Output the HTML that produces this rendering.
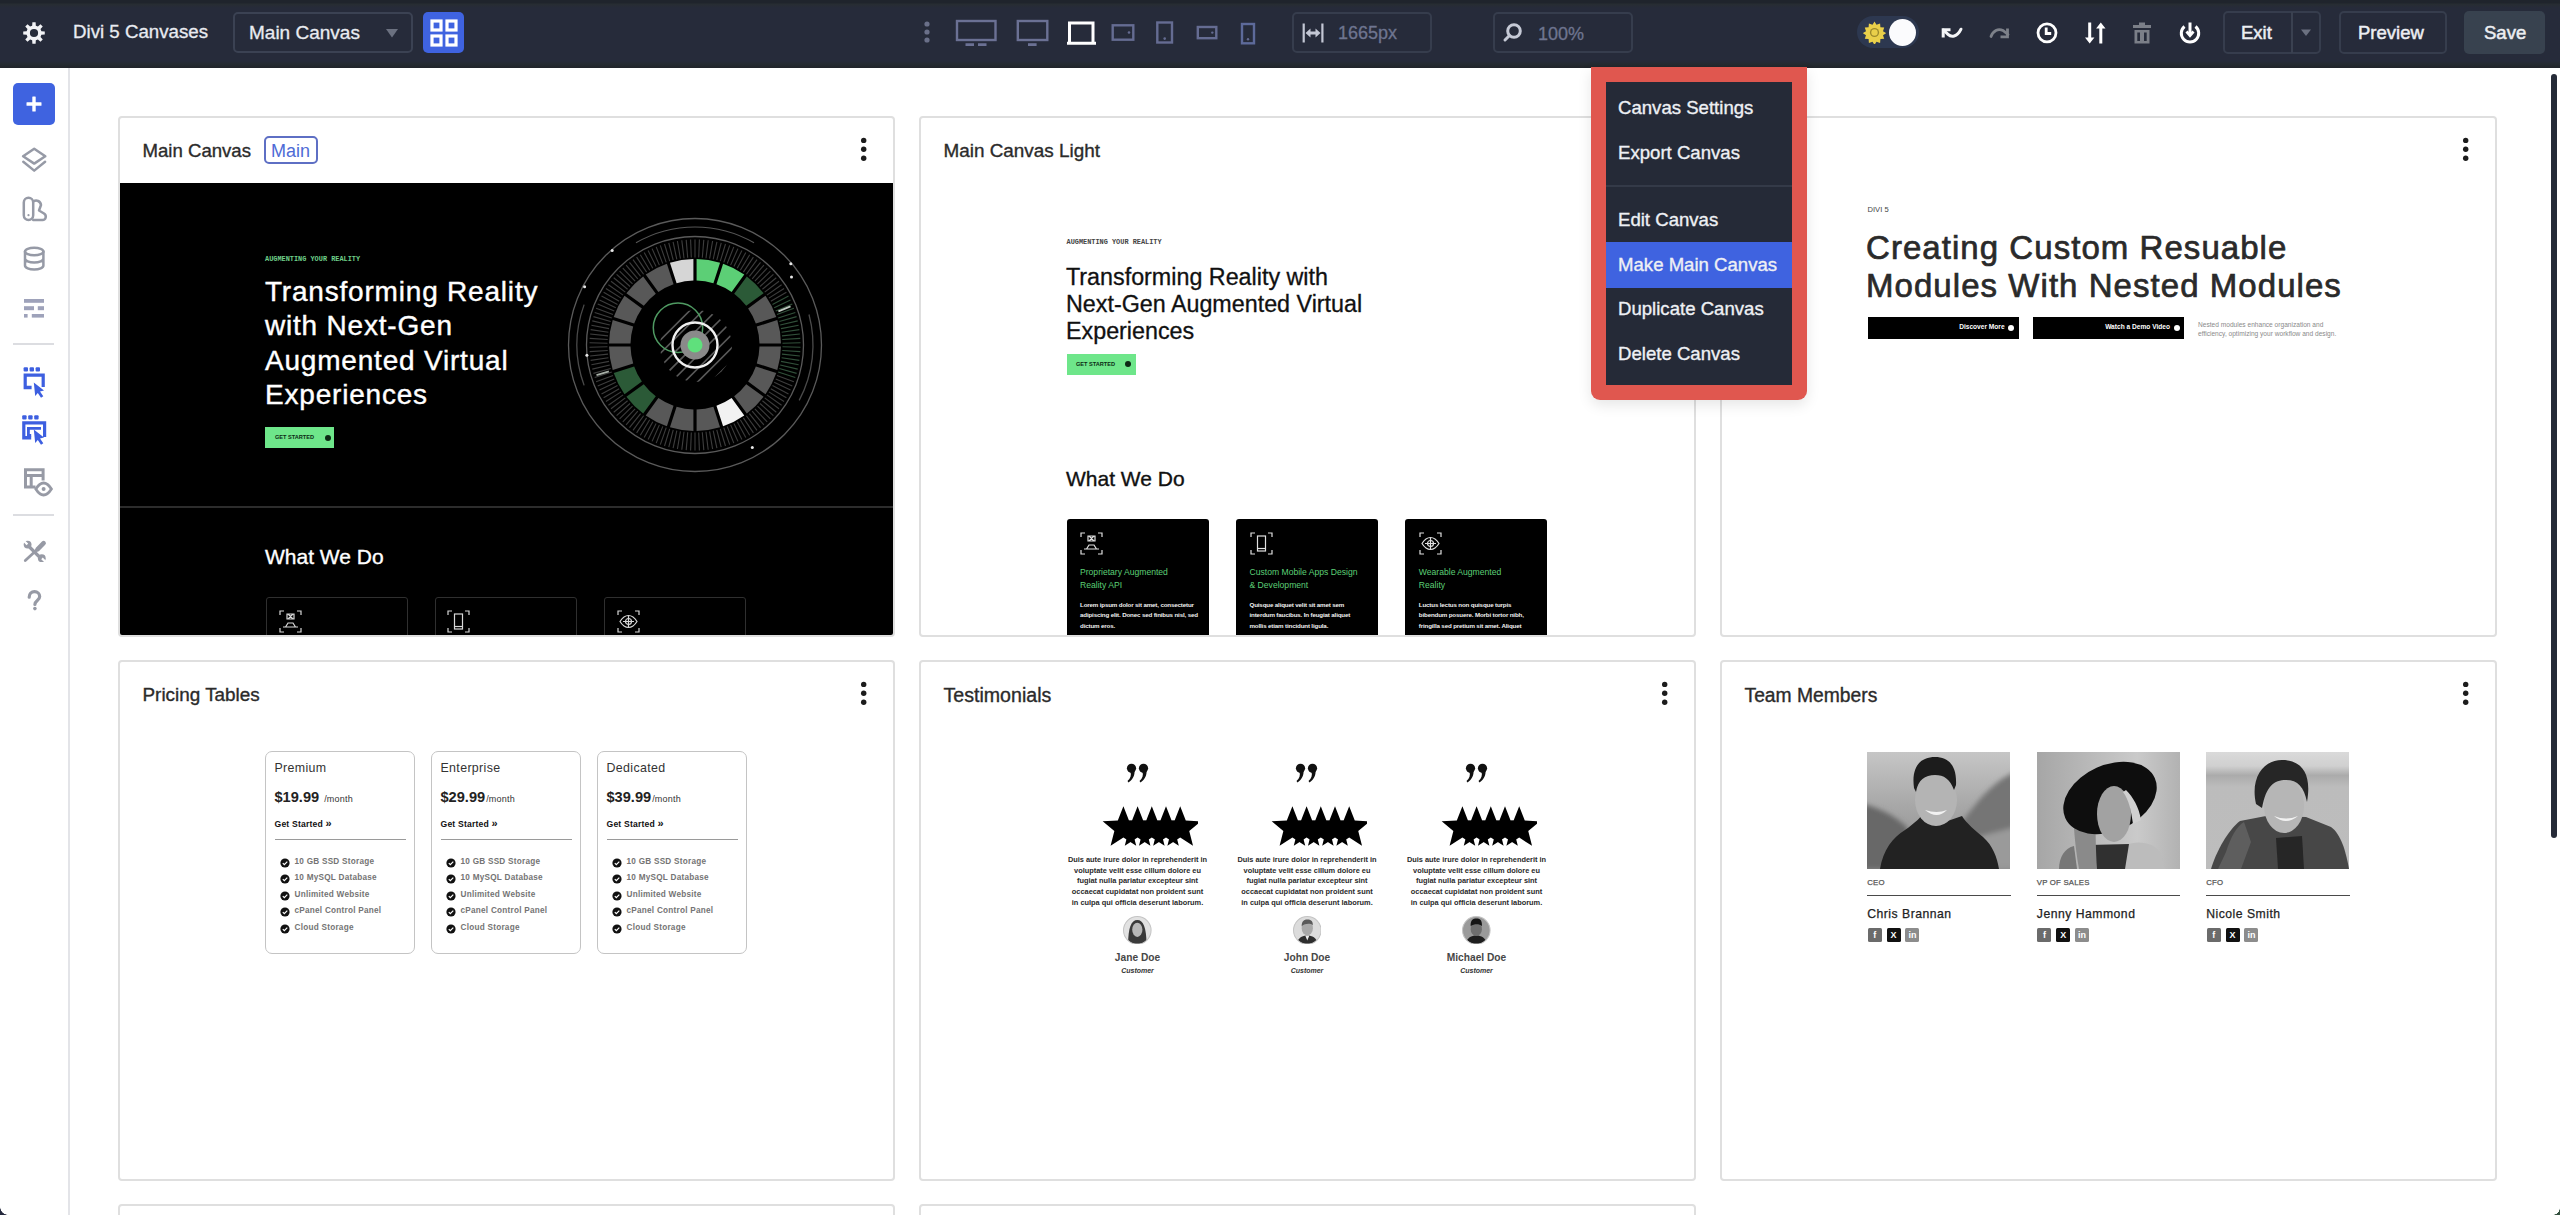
<!DOCTYPE html>
<html><head><meta charset="utf-8">
<style>
*{box-sizing:border-box;margin:0;padding:0}
html,body{width:2560px;height:1215px;overflow:hidden;background:#fff;font-family:"Liberation Sans",sans-serif}
.abs{position:absolute}
#top{position:absolute;left:0;top:0;width:2560px;height:68px;background:linear-gradient(#1f242c 0,#1f242c 3px,#272d32 4px,#262b3a 8px,#262b3a 61px,#252b31 64px,#20242a 68px)}
.tt{position:absolute;color:#e9ebf1;font-size:18px;white-space:nowrap;line-height:1;-webkit-text-stroke-width:0.3px}
.ibox{position:absolute;border:2px solid #363d4d;border-radius:5px}
#side{position:absolute;left:0;top:68px;width:70px;height:1147px;background:#fff;border-right:2px solid #e3e4e8}
.card{position:absolute;width:777px;height:521px;border:2px solid #dfdfdf;border-radius:4px;background:#fff;overflow:hidden}
.ctitle{position:absolute;left:23px;top:23px;font-size:18px;color:#2b2b2b;white-space:nowrap;line-height:1;-webkit-text-stroke:0.35px #2b2b2b}
.kebab{position:absolute;width:6px;height:26px}
.kebab i{position:absolute;left:0;width:6px;height:6px;border-radius:50%;background:#2b2b2b}
.menu-item{position:absolute;left:12px;font-size:18px;color:#eef0f4;white-space:nowrap;line-height:1}
</style></head><body>
<div id="top">
<!-- gear -->
<svg class="abs" style="left:22px;top:21px" width="24" height="24" viewBox="0 0 24 24"><path fill="#f2f3f6" fill-rule="evenodd" d="M10.16 4.63L10.39 1.22L13.61 1.22L13.84 4.63L15.91 5.49L18.48 3.24L20.76 5.52L18.51 8.09L19.37 10.16L22.78 10.39L22.78 13.61L19.37 13.84L18.51 15.91L20.76 18.48L18.48 20.76L15.91 18.51L13.84 19.37L13.61 22.78L10.39 22.78L10.16 19.37L8.09 18.51L5.52 20.76L3.24 18.48L5.49 15.91L4.63 13.84L1.22 13.61L1.22 10.39L4.63 10.16L5.49 8.09L3.24 5.52L5.52 3.24L8.09 5.49ZM12 7.9A4.1 4.1 0 1 0 12 16.1A4.1 4.1 0 1 0 12 7.9Z"/></svg>
<div class="tt" style="left:73px;top:23px;font-size:18.7px">Divi 5 Canvases</div>
<!-- dropdown -->
<div class="ibox" style="left:233px;top:12px;width:180px;height:41px;border-color:#3b4253"></div>
<div class="tt" style="left:249px;top:23px;font-size:19px">Main Canvas</div>
<svg class="abs" style="left:386px;top:29px" width="12" height="9" viewBox="0 0 12 9"><path d="M0 0h12L6 8.5z" fill="#6b7180"/></svg>
<!-- grid button -->
<div class="abs" style="left:423px;top:12px;width:41px;height:41px;background:#3f63e0;border-radius:5px"></div>
<svg class="abs" style="left:430px;top:19px" width="28" height="28" viewBox="0 0 28 28" fill="none" stroke="#fff" stroke-width="3.2"><rect x="2" y="2" width="9" height="9"/><rect x="17" y="2" width="9" height="9"/><rect x="2" y="17" width="9" height="9"/><rect x="17" y="17" width="9" height="9"/></svg>

<!-- kebab -->
<svg class="abs" style="left:922px;top:20px" width="10" height="26" viewBox="0 0 10 26" fill="#6a7089"><circle cx="5" cy="4" r="2.6"/><circle cx="5" cy="12" r="2.6"/><circle cx="5" cy="20" r="2.6"/></svg>
<!-- devices -->
<svg class="abs" style="left:950px;top:14px" width="320" height="36" viewBox="950 14 320 36" fill="none" stroke-width="2.4">
 <g stroke="#6b7194">
  <rect x="957" y="21" width="38.5" height="19"/>
  <path d="M965.5 44.6h8.5M978 44.6h8.5" stroke-width="2.8"/>
  <rect x="1017.8" y="21" width="29.5" height="19"/>
  <path d="M1028 44.6h8.6" stroke-width="2.8"/>
 </g>
 <path d="M1069.5 43V23h23.5v20M1067 43.3h29" stroke="#fff" stroke-width="3"/>
 <g stroke="#656c92">
  <rect x="1112.7" y="25.3" width="20.6" height="14.4"/>
  <rect x="1157.3" y="22.5" width="14.7" height="20"/>
  <rect x="1197.8" y="27" width="18.5" height="11.2"/>
 </g>
 <rect x="1242" y="24" width="12" height="19.3" stroke="#5d6a9a"/>
 <g fill="#656c92"><circle cx="1129" cy="32.5" r="1.3"/><circle cx="1164.7" cy="38.6" r="1.3"/><circle cx="1212.3" cy="32.6" r="1.2"/><circle cx="1248" cy="39.3" r="1.2"/></g>
</svg>
<!-- width box -->
<div class="ibox" style="left:1292px;top:12px;width:140px;height:41px"></div>
<svg class="abs" style="left:1300px;top:22px" width="26" height="22" viewBox="0 0 26 22" fill="#c3c7d4"><rect x="2.6" y="1.5" width="2.2" height="19"/><rect x="21.3" y="1.5" width="2.2" height="19"/><path d="M5.5 11l5-4.5v3h5v-3l5 4.5-5 4.5v-3h-5v3z"/></svg>
<div class="tt" style="left:1338px;top:24px;font-size:18px;color:#6e7590">1665px</div>
<!-- zoom box -->
<div class="ibox" style="left:1493px;top:12px;width:140px;height:41px"></div>
<svg class="abs" style="left:1502px;top:21px" width="24" height="22" viewBox="0 0 24 22" fill="none" stroke="#c6cad6" stroke-width="3"><circle cx="12" cy="10" r="6.3"/><path d="M7.5 14.5l-4.5 4.5" stroke-linecap="round"/></svg>
<div class="tt" style="left:1538px;top:25px;font-size:18px;color:#6e7590">100%</div>

<!-- toggle -->
<div class="abs" style="left:1857px;top:16px;width:62px;height:32px;border-radius:16px;background:#2d3850"></div>
<svg class="abs" style="left:1863px;top:21px" width="23" height="23" viewBox="0 0 23 23"><g fill="#e9d04a"><path d="M11.5 0.5l2 3.2 3.6-1.2.3 3.8 3.8.3-1.2 3.6 3.2 2-3.2 2 1.2 3.6-3.8.3-.3 3.8-3.6-1.2-2 3.2-2-3.2-3.6 1.2-.3-3.8-3.8-.3 1.2-3.6-3.2-2 3.2-2-1.2-3.6 3.8-.3.3-3.8 3.6 1.2z"/></g><circle cx="11.5" cy="11.5" r="4.6" fill="#9b8a2b"/><circle cx="11.5" cy="11.5" r="3.2" fill="#e9d04a"/></svg>
<div class="abs" style="left:1889px;top:19px;width:27px;height:27px;border-radius:50%;background:#fbfbfd"></div>
<!-- undo -->
<svg class="abs" style="left:1938px;top:22px" width="28" height="20" viewBox="0 0 28 20" fill="none" stroke="#f4f5f7" stroke-width="3"><path d="M5.2 15.5V7.8H12.5"/><path d="M5.5 8L10 12.3C13 15.2 19 15.5 23 7.2" stroke-linecap="round"/></svg>
<!-- redo -->
<svg class="abs" style="left:1987px;top:22px" width="28" height="20" viewBox="0 0 28 20" fill="none" stroke="#7d8189" stroke-width="2.8"><path d="M4 14.5C6 9 11 6 16 8.5L21 12.5" stroke-linecap="round"/><path d="M20.5 6.5v8.3h-7"/></svg>
<!-- clock -->
<svg class="abs" style="left:2035px;top:21px" width="24" height="24" viewBox="0 0 24 24" fill="none" stroke="#fff" stroke-width="2.8"><circle cx="12" cy="11.8" r="9"/><path d="M11.2 6.5v6h5" /></svg>
<!-- sort -->
<svg class="abs" style="left:2083px;top:21px" width="24" height="24" viewBox="0 0 24 24" fill="#fff"><path d="M4 1.5h3v15h3.2L5.5 22.5 0.8 16.5H4z" transform="translate(1.2,0)"/><path d="M15.8 22.5h3V7.5h3.2L17.3 1.5 12.6 7.5h3.2z" transform="translate(0.5,0)"/></svg>
<!-- trash -->
<svg class="abs" style="left:2131px;top:21px" width="22" height="24" viewBox="0 0 22 24" fill="#7b7f88"><rect x="8" y="1.5" width="6" height="2.5"/><rect x="2" y="4" width="18" height="3"/><path d="M3.5 9h15v13.5h-15zM6.3 11.5v8.5h2.7v-8.5zM13 11.5v8.5h2.7v-8.5z" fill-rule="evenodd"/></svg>
<!-- power -->
<svg class="abs" style="left:2177px;top:21px" width="26" height="24" viewBox="0 0 26 24" fill="none" stroke="#fff" stroke-width="3"><path d="M7.5 5.5A8.7 8.7 0 1 0 18.5 5.5"/><path d="M13 1.5v12"/><path d="M9.5 10.5l3.5 4 3.5-4" stroke-width="2.8"/></svg>

<!-- exit -->
<div class="ibox" style="left:2223px;top:11px;width:98px;height:43px"></div>
<div class="abs" style="left:2291px;top:12px;width:1.5px;height:41px;background:#3a4150"></div>
<div class="tt" style="left:2241px;top:24px;font-size:18.5px;-webkit-text-stroke:0.5px #eceef2;color:#eceef2">Exit</div>
<svg class="abs" style="left:2300px;top:29px" width="12" height="8" viewBox="0 0 12 8"><path d="M1 0.5h10L6 7z" fill="#6b7180"/></svg>
<div class="ibox" style="left:2339px;top:11px;width:108px;height:43px"></div>
<div class="tt" style="left:2358px;top:24px;font-size:18.5px;-webkit-text-stroke:0.5px #eceef2;color:#eceef2">Preview</div>
<div class="abs" style="left:2464px;top:11px;width:81px;height:43px;background:#38424f;border-radius:5px"></div>
<div class="tt" style="left:2484px;top:24px;font-size:18.5px;-webkit-text-stroke:0.5px #eceef2;color:#eceef2">Save</div>
</div>
<div id="side"></div>
<div class="abs" style="left:13px;top:83px;width:42px;height:42px;background:#3f63e0;border-radius:5px"></div>
<svg class="abs" style="left:24px;top:94px" width="20" height="20" viewBox="0 0 20 20" fill="#fff"><rect x="8.3" y="2.5" width="3.4" height="15" rx="0.5"/><rect x="2.5" y="8.3" width="15" height="3.4" rx="0.5"/></svg>
<svg class="abs" style="left:0;top:130px" width="70" height="160" viewBox="0 130 70 160" fill="none" stroke="#969aa6" stroke-width="2.5" stroke-linejoin="round" stroke-linecap="round">
 <path d="M34.2 148.8L45.3 156.3L34.2 163.6L23.1 156.3Z"/>
 <path d="M23.3 161.8L34.2 170.6L45.1 161.8"/>
 <rect x="23.8" y="197.8" width="9.4" height="22.2" rx="4.7"/>
 <path d="M33.2 201.5C36.5 199.5 40.5 201 41 205L39 210.5L44 213.5C47 215.5 46 220 42.5 220H33.2"/>
 <circle cx="28.5" cy="215.2" r="1.1" fill="#979aa5" stroke="none"/>
 <ellipse cx="34.2" cy="251.5" rx="9.2" ry="3.8"/>
 <path d="M25 251.5v14c0 2.2 4.1 4 9.2 4s9.2-1.8 9.2-4v-14M25 258.5c0 2.2 4.1 4 9.2 4s9.2-1.8 9.2-4"/>
</svg>
<svg class="abs" style="left:0;top:290px" width="70" height="40" viewBox="0 290 70 40" fill="#9ea2ba"><rect x="24" y="299" width="20" height="3.8"/><rect x="24" y="306.2" width="10" height="4"/><rect x="37.8" y="306.2" width="6.2" height="4"/><rect x="24" y="314" width="3.6" height="3.6"/><rect x="31.8" y="314" width="12.2" height="3.6"/></svg>
<div class="abs" style="left:13px;top:343px;width:41px;height:2px;background:#dcdde1"></div>
<svg class="abs" style="left:0;top:360px" width="70" height="90" viewBox="0 360 70 90" fill="#3d5fe0">
 <rect x="23.6" y="367.2" width="4.4" height="4.4" rx="1"/><rect x="29.6" y="367.2" width="4.4" height="4.4" rx="1"/><rect x="35.6" y="367.2" width="4.4" height="4.4" rx="1"/>
 <path d="M23.6 373.6H44.8V387H41.6V376.8H26.8V385.8H31.6V389.2H23.6Z"/>
 <path d="M33.8 382.5L44 390.5L40 391.6L43.3 396.3L41 397.8L37.8 393L35.2 396Z"/>
 <rect x="22.2" y="415.2" width="4.4" height="4.2" rx="1"/><rect x="28.2" y="415.2" width="4.4" height="4.2" rx="1"/><rect x="34.2" y="415.2" width="4.4" height="4.2" rx="1"/>
 <path d="M22.2 421.2H46.2V437H43V424.4H25.4V436H31.2V439.4H22.2Z"/>
 <path d="M27 427H41V429.8H29.8V434H31.2V436.6H27Z"/>
 <path d="M33.8 429.5L44 437.5L40 438.6L43.3 443.3L41 444.8L37.8 440L35.2 443Z"/>
</svg>
<svg class="abs" style="left:0;top:460px" width="70" height="160" viewBox="0 460 70 160" fill="none" stroke="#979aa5" stroke-width="3">
 <path d="M35.5 487H25.5V469.8H43.1V480.5"/>
 <path d="M25.5 475.5H43.1M31.2 475.5V487"/>
 <path d="M35.8 489c2.5-4 5.2-6 7.8-6s5.3 2 7.8 6c-2.5 4-5.2 6-7.8 6s-5.3-2-7.8-6z" stroke-width="2.8"/>
 <circle cx="43.6" cy="489" r="2" fill="#979aa5" stroke="none"/>
 <path d="M29.5 547L40 557.5" stroke-width="3.2"/>
 <circle cx="27.6" cy="544.6" r="3.9" fill="#979aa5" stroke="none"/><path d="M27.4 544.4L24 541" stroke="#fff" stroke-width="2.2"/>
 <circle cx="41.8" cy="558.2" r="3.9" fill="#979aa5" stroke="none"/><path d="M42 558.4L45.4 561.8" stroke="#fff" stroke-width="2.2"/>
 <path d="M43.6 543.2L37.5 549.3" stroke-width="4.6" stroke-linecap="round"/>
 <path d="M37.5 549.3L25.3 560.5" stroke-width="2.8" stroke-linecap="round"/>
 <path d="M29.2 597.2c0-3.3 2.3-5.6 5.3-5.6s5.2 2.2 5.2 5c0 3.8-4.8 4-4.8 7.8" stroke-width="3.2" stroke-linecap="round"/>
 <circle cx="34.9" cy="608.6" r="1.8" fill="#979aa5" stroke="none"/>
</svg>
<div class="abs" style="left:13px;top:514px;width:41px;height:2px;background:#dcdde1"></div>


<div class="card" style="left:118px;top:116px">
<div class="ctitle" style="left:22.5px;top:23.5px;font-size:18.6px">Main Canvas</div>
<div class="abs" style="left:144px;top:18px;width:54px;height:28px;border:2px solid #5e6fc4;border-radius:5px"></div>
<div class="abs" style="left:151px;top:24px;font-size:18px;color:#4e6bd6;line-height:1">Main</div>
<svg class="abs" style="left:738px;top:17px" width="12" height="28" viewBox="0 0 12 28" fill="#1c1c1c"><circle cx="5.7" cy="5.4" r="2.7"/><circle cx="5.7" cy="14.3" r="2.7"/><circle cx="5.7" cy="23.3" r="2.7"/></svg>
<div class="abs" style="left:-1px;top:65px;width:775px;height:460px;background:#000"></div><div class="abs" style="left:0;top:388px;width:773px;height:1.5px;background:#2c2c2c"></div><div class="abs" style="left:145px;top:138px;font-family:'Liberation Mono',monospace;font-size:6.9px;color:#6fd08a;letter-spacing:0;line-height:1;white-space:nowrap;font-weight:bold">AUGMENTING YOUR REALITY</div><div class="abs" style="left:145px;top:156.5px;font-size:28px;color:#fff;line-height:34.5px;white-space:nowrap;letter-spacing:0.8px;-webkit-text-stroke:0.4px #fff">Transforming Reality<br>with Next-Gen<br>Augmented Virtual<br>Experiences</div><div class="abs" style="left:145px;top:309px;width:69px;height:21px;background:#6ee68a"></div><div class="abs" style="left:155px;top:317px;font-size:5.6px;font-weight:bold;color:#0c2a14;line-height:1;white-space:nowrap">GET STARTED</div><div class="abs" style="left:204.5px;top:316.5px;width:6px;height:6px;border-radius:50%;background:#0c2a14"></div><svg class="abs" style="left:440px;top:91.60000000000002px" width="270" height="270" viewBox="560 209.60000000000002 270 270"><circle cx="695" cy="344.6" r="126.5" fill="none" stroke="#5a5a5a" stroke-width="1.3"/><circle cx="695" cy="344.6" r="108.5" fill="none" stroke="#5a5a5a" stroke-width="1.3"/><path d="M808.98 314.06A118 118 0 0 1 799.19 400.00" fill="none" stroke="#4a4a4a" stroke-width="1.3"/><path d="M584.12 384.96A118 118 0 0 1 584.12 304.24" fill="none" stroke="#4a4a4a" stroke-width="1.3"/><path d="M636.00 242.41A118 118 0 0 1 754.00 242.41" fill="none" stroke="#555" stroke-width="1.2"/><line x1="695.0" y1="257.1" x2="695.0" y2="239.1" stroke="#3e3e3e" stroke-width="1.1"/><line x1="698.7" y1="257.2" x2="699.4" y2="239.2" stroke="#3e3e3e" stroke-width="1.1"/><line x1="702.3" y1="257.4" x2="703.8" y2="239.5" stroke="#3e3e3e" stroke-width="1.1"/><line x1="706.0" y1="257.8" x2="708.2" y2="239.9" stroke="#3e3e3e" stroke-width="1.1"/><line x1="709.6" y1="258.3" x2="712.6" y2="240.6" stroke="#3e3e3e" stroke-width="1.1"/><line x1="713.2" y1="259.0" x2="716.9" y2="241.4" stroke="#3e3e3e" stroke-width="1.1"/><line x1="716.8" y1="259.8" x2="721.2" y2="242.4" stroke="#3e3e3e" stroke-width="1.1"/><line x1="720.3" y1="260.8" x2="725.5" y2="243.6" stroke="#3e3e3e" stroke-width="1.1"/><line x1="723.8" y1="262.0" x2="729.7" y2="245.0" stroke="#3e3e3e" stroke-width="1.1"/><line x1="727.2" y1="263.2" x2="733.8" y2="246.5" stroke="#3e3e3e" stroke-width="1.1"/><line x1="730.6" y1="264.7" x2="737.9" y2="248.2" stroke="#3e3e3e" stroke-width="1.1"/><line x1="733.9" y1="266.2" x2="741.9" y2="250.1" stroke="#3e3e3e" stroke-width="1.1"/><line x1="737.2" y1="267.9" x2="745.8" y2="252.1" stroke="#3e3e3e" stroke-width="1.1"/><line x1="740.3" y1="269.8" x2="749.7" y2="254.4" stroke="#3e3e3e" stroke-width="1.1"/><line x1="743.4" y1="271.7" x2="753.4" y2="256.7" stroke="#3e3e3e" stroke-width="1.1"/><line x1="746.4" y1="273.8" x2="757.0" y2="259.2" stroke="#3e3e3e" stroke-width="1.1"/><line x1="749.4" y1="276.0" x2="760.5" y2="261.9" stroke="#3e3e3e" stroke-width="1.1"/><line x1="752.2" y1="278.4" x2="763.9" y2="264.7" stroke="#3e3e3e" stroke-width="1.1"/><line x1="754.9" y1="280.8" x2="767.2" y2="267.7" stroke="#3e3e3e" stroke-width="1.1"/><line x1="757.5" y1="283.4" x2="770.4" y2="270.8" stroke="#3e3e3e" stroke-width="1.1"/><line x1="760.0" y1="286.1" x2="773.4" y2="274.0" stroke="#3e3e3e" stroke-width="1.1"/><line x1="762.4" y1="288.8" x2="776.3" y2="277.4" stroke="#3e3e3e" stroke-width="1.1"/><line x1="764.7" y1="291.7" x2="779.0" y2="280.8" stroke="#3e3e3e" stroke-width="1.1"/><line x1="766.9" y1="294.7" x2="781.6" y2="284.4" stroke="#3e3e3e" stroke-width="1.1"/><line x1="768.9" y1="297.7" x2="784.1" y2="288.1" stroke="#3e3e3e" stroke-width="1.1"/><line x1="770.8" y1="300.9" x2="786.4" y2="291.9" stroke="#3e3e3e" stroke-width="1.1"/><line x1="772.5" y1="304.1" x2="788.5" y2="295.7" stroke="#31503a" stroke-width="1.1"/><line x1="774.2" y1="307.3" x2="790.5" y2="299.7" stroke="#31503a" stroke-width="1.1"/><line x1="775.7" y1="310.7" x2="792.3" y2="303.7" stroke="#31503a" stroke-width="1.1"/><line x1="777.0" y1="314.1" x2="793.9" y2="307.8" stroke="#31503a" stroke-width="1.1"/><line x1="778.2" y1="317.6" x2="795.3" y2="312.0" stroke="#31503a" stroke-width="1.1"/><line x1="779.3" y1="321.1" x2="796.6" y2="316.2" stroke="#31503a" stroke-width="1.1"/><line x1="780.2" y1="324.6" x2="797.7" y2="320.5" stroke="#31503a" stroke-width="1.1"/><line x1="781.0" y1="328.2" x2="798.6" y2="324.8" stroke="#31503a" stroke-width="1.1"/><line x1="781.6" y1="331.8" x2="799.4" y2="329.2" stroke="#31503a" stroke-width="1.1"/><line x1="782.0" y1="335.5" x2="799.9" y2="333.6" stroke="#31503a" stroke-width="1.1"/><line x1="782.3" y1="339.1" x2="800.3" y2="338.0" stroke="#31503a" stroke-width="1.1"/><line x1="782.5" y1="342.8" x2="800.5" y2="342.4" stroke="#31503a" stroke-width="1.1"/><line x1="782.5" y1="346.4" x2="800.5" y2="346.8" stroke="#31503a" stroke-width="1.1"/><line x1="782.3" y1="350.1" x2="800.3" y2="351.2" stroke="#31503a" stroke-width="1.1"/><line x1="782.0" y1="353.7" x2="799.9" y2="355.6" stroke="#31503a" stroke-width="1.1"/><line x1="781.6" y1="357.4" x2="799.4" y2="360.0" stroke="#31503a" stroke-width="1.1"/><line x1="781.0" y1="361.0" x2="798.6" y2="364.4" stroke="#31503a" stroke-width="1.1"/><line x1="780.2" y1="364.6" x2="797.7" y2="368.7" stroke="#31503a" stroke-width="1.1"/><line x1="779.3" y1="368.1" x2="796.6" y2="373.0" stroke="#31503a" stroke-width="1.1"/><line x1="778.2" y1="371.6" x2="795.3" y2="377.2" stroke="#31503a" stroke-width="1.1"/><line x1="777.0" y1="375.1" x2="793.9" y2="381.4" stroke="#3e3e3e" stroke-width="1.1"/><line x1="775.7" y1="378.5" x2="792.3" y2="385.5" stroke="#3e3e3e" stroke-width="1.1"/><line x1="774.2" y1="381.9" x2="790.5" y2="389.5" stroke="#3e3e3e" stroke-width="1.1"/><line x1="772.5" y1="385.1" x2="788.5" y2="393.5" stroke="#3e3e3e" stroke-width="1.1"/><line x1="770.8" y1="388.4" x2="786.4" y2="397.4" stroke="#3e3e3e" stroke-width="1.1"/><line x1="768.9" y1="391.5" x2="784.1" y2="401.1" stroke="#3e3e3e" stroke-width="1.1"/><line x1="766.9" y1="394.5" x2="781.6" y2="404.8" stroke="#3e3e3e" stroke-width="1.1"/><line x1="764.7" y1="397.5" x2="779.0" y2="408.4" stroke="#3e3e3e" stroke-width="1.1"/><line x1="762.4" y1="400.4" x2="776.3" y2="411.8" stroke="#3e3e3e" stroke-width="1.1"/><line x1="760.0" y1="403.1" x2="773.4" y2="415.2" stroke="#3e3e3e" stroke-width="1.1"/><line x1="757.5" y1="405.8" x2="770.4" y2="418.4" stroke="#3e3e3e" stroke-width="1.1"/><line x1="754.9" y1="408.4" x2="767.2" y2="421.5" stroke="#3e3e3e" stroke-width="1.1"/><line x1="752.2" y1="410.8" x2="763.9" y2="424.5" stroke="#3e3e3e" stroke-width="1.1"/><line x1="749.4" y1="413.2" x2="760.5" y2="427.3" stroke="#3e3e3e" stroke-width="1.1"/><line x1="746.4" y1="415.4" x2="757.0" y2="430.0" stroke="#3e3e3e" stroke-width="1.1"/><line x1="743.4" y1="417.5" x2="753.4" y2="432.5" stroke="#3e3e3e" stroke-width="1.1"/><line x1="740.3" y1="419.4" x2="749.7" y2="434.8" stroke="#3e3e3e" stroke-width="1.1"/><line x1="737.2" y1="421.3" x2="745.8" y2="437.1" stroke="#3e3e3e" stroke-width="1.1"/><line x1="733.9" y1="423.0" x2="741.9" y2="439.1" stroke="#3e3e3e" stroke-width="1.1"/><line x1="730.6" y1="424.5" x2="737.9" y2="441.0" stroke="#3e3e3e" stroke-width="1.1"/><line x1="727.2" y1="426.0" x2="733.8" y2="442.7" stroke="#3e3e3e" stroke-width="1.1"/><line x1="723.8" y1="427.2" x2="729.7" y2="444.2" stroke="#3e3e3e" stroke-width="1.1"/><line x1="720.3" y1="428.4" x2="725.5" y2="445.6" stroke="#3e3e3e" stroke-width="1.1"/><line x1="716.8" y1="429.4" x2="721.2" y2="446.8" stroke="#3e3e3e" stroke-width="1.1"/><line x1="713.2" y1="430.2" x2="716.9" y2="447.8" stroke="#3e3e3e" stroke-width="1.1"/><line x1="709.6" y1="430.9" x2="712.6" y2="448.6" stroke="#3e3e3e" stroke-width="1.1"/><line x1="706.0" y1="431.4" x2="708.2" y2="449.3" stroke="#3e3e3e" stroke-width="1.1"/><line x1="702.3" y1="431.8" x2="703.8" y2="449.7" stroke="#3e3e3e" stroke-width="1.1"/><line x1="698.7" y1="432.0" x2="699.4" y2="450.0" stroke="#3e3e3e" stroke-width="1.1"/><line x1="695.0" y1="432.1" x2="695.0" y2="450.1" stroke="#3e3e3e" stroke-width="1.1"/><line x1="691.3" y1="432.0" x2="690.6" y2="450.0" stroke="#3e3e3e" stroke-width="1.1"/><line x1="687.7" y1="431.8" x2="686.2" y2="449.7" stroke="#3e3e3e" stroke-width="1.1"/><line x1="684.0" y1="431.4" x2="681.8" y2="449.3" stroke="#3e3e3e" stroke-width="1.1"/><line x1="680.4" y1="430.9" x2="677.4" y2="448.6" stroke="#3e3e3e" stroke-width="1.1"/><line x1="676.8" y1="430.2" x2="673.1" y2="447.8" stroke="#3e3e3e" stroke-width="1.1"/><line x1="673.2" y1="429.4" x2="668.8" y2="446.8" stroke="#3e3e3e" stroke-width="1.1"/><line x1="669.7" y1="428.4" x2="664.5" y2="445.6" stroke="#3e3e3e" stroke-width="1.1"/><line x1="666.2" y1="427.2" x2="660.3" y2="444.2" stroke="#3e3e3e" stroke-width="1.1"/><line x1="662.8" y1="426.0" x2="656.2" y2="442.7" stroke="#3e3e3e" stroke-width="1.1"/><line x1="659.4" y1="424.5" x2="652.1" y2="441.0" stroke="#3e3e3e" stroke-width="1.1"/><line x1="656.1" y1="423.0" x2="648.1" y2="439.1" stroke="#3e3e3e" stroke-width="1.1"/><line x1="652.8" y1="421.3" x2="644.2" y2="437.1" stroke="#3e3e3e" stroke-width="1.1"/><line x1="649.7" y1="419.4" x2="640.3" y2="434.8" stroke="#3e3e3e" stroke-width="1.1"/><line x1="646.6" y1="417.5" x2="636.6" y2="432.5" stroke="#3e3e3e" stroke-width="1.1"/><line x1="643.6" y1="415.4" x2="633.0" y2="430.0" stroke="#3e3e3e" stroke-width="1.1"/><line x1="640.6" y1="413.2" x2="629.5" y2="427.3" stroke="#3e3e3e" stroke-width="1.1"/><line x1="637.8" y1="410.8" x2="626.1" y2="424.5" stroke="#3e3e3e" stroke-width="1.1"/><line x1="635.1" y1="408.4" x2="622.8" y2="421.5" stroke="#3e3e3e" stroke-width="1.1"/><line x1="632.5" y1="405.8" x2="619.6" y2="418.4" stroke="#3e3e3e" stroke-width="1.1"/><line x1="630.0" y1="403.1" x2="616.6" y2="415.2" stroke="#3e3e3e" stroke-width="1.1"/><line x1="627.6" y1="400.4" x2="613.7" y2="411.8" stroke="#3e3e3e" stroke-width="1.1"/><line x1="625.3" y1="397.5" x2="611.0" y2="408.4" stroke="#3e3e3e" stroke-width="1.1"/><line x1="623.1" y1="394.5" x2="608.4" y2="404.8" stroke="#3e3e3e" stroke-width="1.1"/><line x1="621.1" y1="391.5" x2="605.9" y2="401.1" stroke="#3e3e3e" stroke-width="1.1"/><line x1="619.2" y1="388.3" x2="603.6" y2="397.3" stroke="#3e3e3e" stroke-width="1.1"/><line x1="617.5" y1="385.1" x2="601.5" y2="393.5" stroke="#3e3e3e" stroke-width="1.1"/><line x1="615.8" y1="381.9" x2="599.5" y2="389.5" stroke="#3e3e3e" stroke-width="1.1"/><line x1="614.3" y1="378.5" x2="597.7" y2="385.5" stroke="#3e3e3e" stroke-width="1.1"/><line x1="613.0" y1="375.1" x2="596.1" y2="381.4" stroke="#3e3e3e" stroke-width="1.1"/><line x1="611.8" y1="371.6" x2="594.7" y2="377.2" stroke="#3e3e3e" stroke-width="1.1"/><line x1="610.7" y1="368.1" x2="593.4" y2="373.0" stroke="#3e3e3e" stroke-width="1.1"/><line x1="609.8" y1="364.6" x2="592.3" y2="368.7" stroke="#3e3e3e" stroke-width="1.1"/><line x1="609.0" y1="361.0" x2="591.4" y2="364.4" stroke="#3e3e3e" stroke-width="1.1"/><line x1="608.4" y1="357.4" x2="590.6" y2="360.0" stroke="#3e3e3e" stroke-width="1.1"/><line x1="608.0" y1="353.7" x2="590.1" y2="355.6" stroke="#3e3e3e" stroke-width="1.1"/><line x1="607.7" y1="350.1" x2="589.7" y2="351.2" stroke="#3e3e3e" stroke-width="1.1"/><line x1="607.5" y1="346.4" x2="589.5" y2="346.8" stroke="#3e3e3e" stroke-width="1.1"/><line x1="607.5" y1="342.8" x2="589.5" y2="342.4" stroke="#3e3e3e" stroke-width="1.1"/><line x1="607.7" y1="339.1" x2="589.7" y2="338.0" stroke="#3e3e3e" stroke-width="1.1"/><line x1="608.0" y1="335.5" x2="590.1" y2="333.6" stroke="#3e3e3e" stroke-width="1.1"/><line x1="608.4" y1="331.8" x2="590.6" y2="329.2" stroke="#3e3e3e" stroke-width="1.1"/><line x1="609.0" y1="328.2" x2="591.4" y2="324.8" stroke="#3e3e3e" stroke-width="1.1"/><line x1="609.8" y1="324.6" x2="592.3" y2="320.5" stroke="#3e3e3e" stroke-width="1.1"/><line x1="610.7" y1="321.1" x2="593.4" y2="316.2" stroke="#3e3e3e" stroke-width="1.1"/><line x1="611.8" y1="317.6" x2="594.7" y2="312.0" stroke="#3e3e3e" stroke-width="1.1"/><line x1="613.0" y1="314.1" x2="596.1" y2="307.8" stroke="#3e3e3e" stroke-width="1.1"/><line x1="614.3" y1="310.7" x2="597.7" y2="303.7" stroke="#3e3e3e" stroke-width="1.1"/><line x1="615.8" y1="307.3" x2="599.5" y2="299.7" stroke="#3e3e3e" stroke-width="1.1"/><line x1="617.5" y1="304.1" x2="601.5" y2="295.7" stroke="#3e3e3e" stroke-width="1.1"/><line x1="619.2" y1="300.9" x2="603.6" y2="291.9" stroke="#3e3e3e" stroke-width="1.1"/><line x1="621.1" y1="297.7" x2="605.9" y2="288.1" stroke="#3e3e3e" stroke-width="1.1"/><line x1="623.1" y1="294.7" x2="608.4" y2="284.4" stroke="#3e3e3e" stroke-width="1.1"/><line x1="625.3" y1="291.7" x2="611.0" y2="280.8" stroke="#3e3e3e" stroke-width="1.1"/><line x1="627.6" y1="288.8" x2="613.7" y2="277.4" stroke="#3e3e3e" stroke-width="1.1"/><line x1="630.0" y1="286.1" x2="616.6" y2="274.0" stroke="#3e3e3e" stroke-width="1.1"/><line x1="632.5" y1="283.4" x2="619.6" y2="270.8" stroke="#3e3e3e" stroke-width="1.1"/><line x1="635.1" y1="280.8" x2="622.8" y2="267.7" stroke="#3e3e3e" stroke-width="1.1"/><line x1="637.8" y1="278.4" x2="626.1" y2="264.7" stroke="#3e3e3e" stroke-width="1.1"/><line x1="640.6" y1="276.0" x2="629.5" y2="261.9" stroke="#3e3e3e" stroke-width="1.1"/><line x1="643.6" y1="273.8" x2="633.0" y2="259.2" stroke="#3e3e3e" stroke-width="1.1"/><line x1="646.6" y1="271.7" x2="636.6" y2="256.7" stroke="#3e3e3e" stroke-width="1.1"/><line x1="649.7" y1="269.8" x2="640.3" y2="254.4" stroke="#3e3e3e" stroke-width="1.1"/><line x1="652.8" y1="267.9" x2="644.2" y2="252.1" stroke="#3e3e3e" stroke-width="1.1"/><line x1="656.1" y1="266.2" x2="648.1" y2="250.1" stroke="#3e3e3e" stroke-width="1.1"/><line x1="659.4" y1="264.7" x2="652.1" y2="248.2" stroke="#3e3e3e" stroke-width="1.1"/><line x1="662.8" y1="263.2" x2="656.2" y2="246.5" stroke="#3e3e3e" stroke-width="1.1"/><line x1="666.2" y1="262.0" x2="660.3" y2="245.0" stroke="#3e3e3e" stroke-width="1.1"/><line x1="669.7" y1="260.8" x2="664.5" y2="243.6" stroke="#3e3e3e" stroke-width="1.1"/><line x1="673.2" y1="259.8" x2="668.8" y2="242.4" stroke="#3e3e3e" stroke-width="1.1"/><line x1="676.8" y1="259.0" x2="673.1" y2="241.4" stroke="#3e3e3e" stroke-width="1.1"/><line x1="680.4" y1="258.3" x2="677.4" y2="240.6" stroke="#3e3e3e" stroke-width="1.1"/><line x1="684.0" y1="257.8" x2="681.8" y2="239.9" stroke="#3e3e3e" stroke-width="1.1"/><line x1="687.7" y1="257.4" x2="686.2" y2="239.5" stroke="#3e3e3e" stroke-width="1.1"/><line x1="691.3" y1="257.2" x2="690.6" y2="239.2" stroke="#3e3e3e" stroke-width="1.1"/><line x1="778.4" y1="310.9" x2="790.5" y2="306.0" stroke="#bfc8c0" stroke-width="1.8"/><line x1="608.9" y1="370.9" x2="596.5" y2="374.7" stroke="#a8b0a8" stroke-width="1.8"/><path d="M696.60 258.61A86 86 0 0 1 720.05 262.33L713.40 282.78A64.5 64.5 0 0 0 696.60 280.12Z" fill="#5ccf76"/><path d="M723.09 263.32A86 86 0 0 1 744.25 274.10L731.61 291.49A64.5 64.5 0 0 0 716.45 283.77Z" fill="#5ccf76"/><path d="M746.84 275.98A86 86 0 0 1 763.62 292.76L746.23 305.41A64.5 64.5 0 0 0 734.19 293.37Z" fill="#2b5a37"/><path d="M765.50 295.35A86 86 0 0 1 776.28 316.51L755.83 323.15A64.5 64.5 0 0 0 748.11 307.99Z" fill="#585858"/><path d="M777.27 319.55A86 86 0 0 1 780.99 343.00L759.48 343.00A64.5 64.5 0 0 0 756.82 326.20Z" fill="#585858"/><path d="M780.99 346.20A86 86 0 0 1 777.27 369.65L756.82 363.00A64.5 64.5 0 0 0 759.48 346.20Z" fill="#585858"/><path d="M776.28 372.69A86 86 0 0 1 765.50 393.85L748.11 381.21A64.5 64.5 0 0 0 755.83 366.05Z" fill="#585858"/><path d="M763.62 396.44A86 86 0 0 1 746.84 413.22L734.19 395.83A64.5 64.5 0 0 0 746.23 383.79Z" fill="#585858"/><path d="M744.25 415.10A86 86 0 0 1 723.09 425.88L716.45 405.43A64.5 64.5 0 0 0 731.61 397.71Z" fill="#f2f2f2"/><path d="M720.05 426.87A86 86 0 0 1 696.60 430.59L696.60 409.08A64.5 64.5 0 0 0 713.40 406.42Z" fill="#585858"/><path d="M693.40 430.59A86 86 0 0 1 669.95 426.87L676.60 406.42A64.5 64.5 0 0 0 693.40 409.08Z" fill="#585858"/><path d="M666.91 425.88A86 86 0 0 1 645.75 415.10L658.39 397.71A64.5 64.5 0 0 0 673.55 405.43Z" fill="#585858"/><path d="M643.16 413.22A86 86 0 0 1 626.38 396.44L643.77 383.79A64.5 64.5 0 0 0 655.81 395.83Z" fill="#2b5a37"/><path d="M624.50 393.85A86 86 0 0 1 613.72 372.69L634.17 366.05A64.5 64.5 0 0 0 641.89 381.21Z" fill="#2b5a37"/><path d="M612.73 369.65A86 86 0 0 1 609.01 346.20L630.52 346.20A64.5 64.5 0 0 0 633.18 363.00Z" fill="#585858"/><path d="M609.01 343.00A86 86 0 0 1 612.73 319.55L633.18 326.20A64.5 64.5 0 0 0 630.52 343.00Z" fill="#585858"/><path d="M613.72 316.51A86 86 0 0 1 624.50 295.35L641.89 307.99A64.5 64.5 0 0 0 634.17 323.15Z" fill="#585858"/><path d="M626.38 292.76A86 86 0 0 1 643.16 275.98L655.81 293.37A64.5 64.5 0 0 0 643.77 305.41Z" fill="#585858"/><path d="M645.75 274.10A86 86 0 0 1 666.91 263.32L673.55 283.77A64.5 64.5 0 0 0 658.39 291.49Z" fill="#585858"/><path d="M669.95 262.33A86 86 0 0 1 693.40 258.61L693.40 280.12A64.5 64.5 0 0 0 676.60 282.78Z" fill="#d6d6d6"/><clipPath id="hc"><circle cx="696" cy="345.6" r="36"/></clipPath><g clip-path="url(#hc)" stroke="#5a5a5a" stroke-width="1.6"><line x1="569.0" y1="338.6" x2="689.0" y2="218.60000000000002" /><line x1="575.6" y1="345.20000000000005" x2="695.6" y2="225.20000000000002" /><line x1="582.2" y1="351.8" x2="702.2" y2="231.8" /><line x1="588.8" y1="358.40000000000003" x2="708.8" y2="238.40000000000003" /><line x1="595.4" y1="365.0" x2="715.4" y2="245.00000000000003" /><line x1="602.0" y1="371.6" x2="722.0" y2="251.60000000000002" /><line x1="608.6" y1="378.20000000000005" x2="728.6" y2="258.20000000000005" /><line x1="615.2" y1="384.8" x2="735.2" y2="264.8" /><line x1="621.8" y1="391.40000000000003" x2="741.8" y2="271.40000000000003" /><line x1="628.4" y1="398.0" x2="748.4" y2="278.0" /><line x1="635.0" y1="404.6" x2="755.0" y2="284.6" /><line x1="641.6" y1="411.20000000000005" x2="761.6" y2="291.20000000000005" /><line x1="648.2" y1="417.8" x2="768.2" y2="297.8" /><line x1="654.8" y1="424.40000000000003" x2="774.8" y2="304.40000000000003" /><line x1="661.4" y1="431.0" x2="781.4" y2="311.0" /><line x1="668.0" y1="437.6" x2="788.0" y2="317.6" /><line x1="674.6" y1="444.20000000000005" x2="794.6" y2="324.20000000000005" /><line x1="681.2" y1="450.8" x2="801.2" y2="330.8" /><line x1="687.8" y1="457.40000000000003" x2="807.8" y2="337.40000000000003" /><line x1="694.4" y1="464.0" x2="814.4" y2="344.0" /><line x1="701.0" y1="470.6" x2="821.0" y2="350.6" /></g><circle cx="678" cy="327.3" r="24.7" fill="none" stroke="#4f9a62" stroke-width="1.5"/><circle cx="695" cy="344.6" r="14.5" fill="#8a8a8a"/><circle cx="695" cy="344.6" r="7.5" fill="#5fe07c"/><circle cx="695" cy="344.6" r="22.5" fill="none" stroke="#f0f0f0" stroke-width="2.4"/><circle cx="612.2" cy="250.2" r="1.5" fill="#e8e8e8"/><circle cx="584.6" cy="286.4" r="1.5" fill="#e8e8e8"/><circle cx="586.9" cy="354.8" r="1.5" fill="#e8e8e8"/><circle cx="790.8" cy="263.4" r="1.5" fill="#e8e8e8"/><circle cx="791.5" cy="276.5" r="1.5" fill="#e8e8e8"/><circle cx="752.3" cy="447" r="1.5" fill="#e8e8e8"/></svg><div class="abs" style="left:145px;top:428px;font-size:21px;color:#fff;line-height:1;white-space:nowrap;-webkit-text-stroke:0.35px #fff">What We Do</div><div class="abs" style="left:146px;top:479px;width:142px;height:60px;border:1.3px solid #2f2f2f;border-radius:3px"></div><svg class="abs" style="left:158.5px;top:492px" width="23" height="23" viewBox="0 0 23 23" fill="none" stroke="#d8d8d8" stroke-width="1.2"><path d="M1 5V1h4M18 1h4v4M22 18v4h-4M5 22H1v-4"/><path d="M9 4l5 5M14 4l-5 5M8 4h7v5H8zM4 17h15M6.5 17l2.5-4h5l2.5 4" /></svg><div class="abs" style="left:314.5px;top:479px;width:142px;height:60px;border:1.3px solid #2f2f2f;border-radius:3px"></div><svg class="abs" style="left:327.0px;top:492px" width="23" height="23" viewBox="0 0 23 23" fill="none" stroke="#d8d8d8" stroke-width="1.2"><path d="M1 5V1h4M18 1h4v4M22 18v4h-4M5 22H1v-4"/><rect x="7.5" y="4" width="8" height="15"/><path d="M7.5 16.5h8"/></svg><div class="abs" style="left:484px;top:479px;width:142px;height:60px;border:1.3px solid #2f2f2f;border-radius:3px"></div><svg class="abs" style="left:496.5px;top:492px" width="23" height="23" viewBox="0 0 23 23" fill="none" stroke="#d8d8d8" stroke-width="1.2"><path d="M1 5V1h4M18 1h4v4M22 18v4h-4M5 22H1v-4"/><path d="M3 11.5c2.5-4 5.5-6 8.5-6s6 2 8.5 6c-2.5 4-5.5 6-8.5 6s-6-2-8.5-6z"/><circle cx="11.5" cy="11.5" r="3"/><path d="M6 11.5h11M11.5 6v11"/></svg>
</div>
<div class="card" style="left:919px;top:116px">
<div class="ctitle" style="left:22.5px;top:23.5px;font-size:18.9px">Main Canvas Light</div>
<svg class="abs" style="left:738px;top:17px" width="12" height="28" viewBox="0 0 12 28" fill="#1c1c1c"><circle cx="5.7" cy="5.4" r="2.7"/><circle cx="5.7" cy="14.3" r="2.7"/><circle cx="5.7" cy="23.3" r="2.7"/></svg>
<div class="abs" style="left:145.5px;top:120.5px;font-family:'Liberation Mono',monospace;font-size:6.9px;color:#444;line-height:1;white-space:nowrap;font-weight:bold">AUGMENTING YOUR REALITY</div><div class="abs" style="left:145px;top:146px;font-size:23.3px;color:#111;line-height:26.8px;white-space:nowrap;-webkit-text-stroke:0.3px #111">Transforming Reality with<br>Next-Gen Augmented Virtual<br>Experiences</div><div class="abs" style="left:145.5px;top:235.5px;width:69px;height:21px;background:#6ee68a"></div><div class="abs" style="left:155px;top:243.5px;font-size:5.6px;font-weight:bold;color:#0c2a14;line-height:1;white-space:nowrap">GET STARTED</div><div class="abs" style="left:204px;top:243px;width:6px;height:6px;border-radius:50%;background:#0c2a14"></div><div class="abs" style="left:145px;top:349.5px;font-size:21px;color:#111;line-height:1;white-space:nowrap;-webkit-text-stroke:0.35px #111">What We Do</div><div class="abs" style="left:145.5px;top:401px;width:142px;height:130px;background:#000;border-radius:3px"></div><svg class="abs" style="left:159.0px;top:413.5px" width="23" height="23" viewBox="0 0 23 23" fill="none" stroke="#e0e0e0" stroke-width="1.2"><path d="M1 5V1h4M18 1h4v4M22 18v4h-4M5 22H1v-4"/><path d="M9 4l5 5M14 4l-5 5M8 4h7v5H8zM4 17h15M6.5 17l2.5-4h5l2.5 4" /></svg><div class="abs" style="left:159.0px;top:448px;font-size:8.6px;color:#5ccf76;line-height:12.6px;white-space:nowrap">Proprietary Augmented<br>Reality API</div><div class="abs" style="left:159.0px;top:481.5px;font-size:6.2px;font-weight:bold;color:#f2f2f2;line-height:10.8px;white-space:nowrap;letter-spacing:-0.15px">Lorem ipsum dolor sit amet, consectetur<br>adipiscing elit. Donec sed finibus nisl, sed<br>dictum eros.</div><div class="abs" style="left:315px;top:401px;width:142px;height:130px;background:#000;border-radius:3px"></div><svg class="abs" style="left:328.5px;top:413.5px" width="23" height="23" viewBox="0 0 23 23" fill="none" stroke="#e0e0e0" stroke-width="1.2"><path d="M1 5V1h4M18 1h4v4M22 18v4h-4M5 22H1v-4"/><rect x="7.5" y="4" width="8" height="15"/><path d="M7.5 16.5h8"/></svg><div class="abs" style="left:328.5px;top:448px;font-size:8.6px;color:#5ccf76;line-height:12.6px;white-space:nowrap">Custom Mobile Apps Design<br>&amp; Development</div><div class="abs" style="left:328.5px;top:481.5px;font-size:6.2px;font-weight:bold;color:#f2f2f2;line-height:10.8px;white-space:nowrap;letter-spacing:-0.15px">Quisque aliquet velit sit amet sem<br>interdum faucibus. In feugiat aliquet<br>mollis etiam tincidunt ligula.</div><div class="abs" style="left:484.29999999999995px;top:401px;width:142px;height:130px;background:#000;border-radius:3px"></div><svg class="abs" style="left:497.79999999999995px;top:413.5px" width="23" height="23" viewBox="0 0 23 23" fill="none" stroke="#e0e0e0" stroke-width="1.2"><path d="M1 5V1h4M18 1h4v4M22 18v4h-4M5 22H1v-4"/><path d="M3 11.5c2.5-4 5.5-6 8.5-6s6 2 8.5 6c-2.5 4-5.5 6-8.5 6s-6-2-8.5-6z"/><circle cx="11.5" cy="11.5" r="3"/><path d="M6 11.5h11M11.5 6v11"/></svg><div class="abs" style="left:497.79999999999995px;top:448px;font-size:8.6px;color:#5ccf76;line-height:12.6px;white-space:nowrap">Wearable Augmented<br>Reality</div><div class="abs" style="left:497.79999999999995px;top:481.5px;font-size:6.2px;font-weight:bold;color:#f2f2f2;line-height:10.8px;white-space:nowrap;letter-spacing:-0.15px">Luctus lectus non quisque turpis<br>bibendum posuere. Morbi tortor nibh,<br>fringilla sed pretium sit amet. Aliquet</div>
</div>
<div class="card" style="left:1720px;top:116px">
<svg class="abs" style="left:738px;top:17px" width="12" height="28" viewBox="0 0 12 28" fill="#1c1c1c"><circle cx="5.7" cy="5.4" r="2.7"/><circle cx="5.7" cy="14.3" r="2.7"/><circle cx="5.7" cy="23.3" r="2.7"/></svg>
<div class="abs" style="left:145.5px;top:88px;font-size:7.6px;color:#444;line-height:1;white-space:nowrap">DIVI 5</div><div class="abs" style="left:144px;top:111px;font-size:33px;color:#2a2a2a;line-height:37.8px;white-space:nowrap;letter-spacing:1.05px;-webkit-text-stroke:0.7px #2a2a2a">Creating Custom Resuable<br>Modules With Nested Modules</div><div class="abs" style="left:145.79999999999995px;top:199px;width:150.79999999999995px;height:22px;background:#000"></div><div class="abs" style="left:145.79999999999995px;top:206px;width:136.79999999999995px;text-align:right;font-size:6.6px;color:#fff;line-height:1;white-space:nowrap;font-weight:bold">Discover More</div><div class="abs" style="left:286.0999999999999px;top:207px;width:6px;height:6px;border-radius:50%;background:#fff"></div><div class="abs" style="left:311.29999999999995px;top:199px;width:150.70000000000005px;height:22px;background:#000"></div><div class="abs" style="left:311.29999999999995px;top:206px;width:136.70000000000005px;text-align:right;font-size:6.6px;color:#fff;line-height:1;white-space:nowrap;font-weight:bold">Watch a Demo Video</div><div class="abs" style="left:451.5px;top:207px;width:6px;height:6px;border-radius:50%;background:#fff"></div><div class="abs" style="left:476px;top:201.5px;font-size:6.6px;color:#8a8a8a;line-height:9px;white-space:nowrap">Nested modules enhance organization and<br>efficiency, optimizing your workflow and design.</div>
</div>
<div class="card" style="left:118px;top:660px">
<div class="ctitle" style="left:22.5px;top:23.5px;font-size:18.9px">Pricing Tables</div>
<svg class="abs" style="left:738px;top:17px" width="12" height="28" viewBox="0 0 12 28" fill="#1c1c1c"><circle cx="5.7" cy="5.4" r="2.7"/><circle cx="5.7" cy="14.3" r="2.7"/><circle cx="5.7" cy="23.3" r="2.7"/></svg>
<div class="abs" style="left:145px;top:89px;width:150px;height:203px;border:1.5px solid #c4c4c4;border-radius:7px"></div><div class="abs" style="left:154.5px;top:100px;font-size:12.4px;color:#333;line-height:1;white-space:nowrap;letter-spacing:0.35px">Premium</div><div class="abs" style="left:154.5px;top:128px;font-size:14.6px;font-weight:bold;color:#222;line-height:1;white-space:nowrap">$19.99<span style="font-size:9px;font-weight:normal;color:#333;margin-left:5px;letter-spacing:0.2px">/month</span></div><div class="abs" style="left:154.5px;top:155.5px;font-size:8.6px;font-weight:bold;color:#111;line-height:1;white-space:nowrap;letter-spacing:0.2px">Get Started <span style="font-size:11px;position:relative;top:0.5px">&#187;</span></div><div class="abs" style="left:154.5px;top:176.5px;width:131px;height:1.5px;background:#9a9a9a"></div><svg class="abs" style="left:160px;top:196.0px" width="10" height="10" viewBox="0 0 10 10"><circle cx="5" cy="5" r="4.6" fill="#111"/><path d="M2.8 5.2l1.5 1.5 3-3" fill="none" stroke="#fff" stroke-width="1.2"/></svg><div class="abs" style="left:174.5px;top:196.0px;font-size:8.2px;font-weight:bold;color:#747474;line-height:1;white-space:nowrap;letter-spacing:0.25px">10 GB SSD Storage</div><svg class="abs" style="left:160px;top:212.39999999999998px" width="10" height="10" viewBox="0 0 10 10"><circle cx="5" cy="5" r="4.6" fill="#111"/><path d="M2.8 5.2l1.5 1.5 3-3" fill="none" stroke="#fff" stroke-width="1.2"/></svg><div class="abs" style="left:174.5px;top:212.39999999999998px;font-size:8.2px;font-weight:bold;color:#747474;line-height:1;white-space:nowrap;letter-spacing:0.25px">10 MySQL Database</div><svg class="abs" style="left:160px;top:228.79999999999995px" width="10" height="10" viewBox="0 0 10 10"><circle cx="5" cy="5" r="4.6" fill="#111"/><path d="M2.8 5.2l1.5 1.5 3-3" fill="none" stroke="#fff" stroke-width="1.2"/></svg><div class="abs" style="left:174.5px;top:228.79999999999995px;font-size:8.2px;font-weight:bold;color:#747474;line-height:1;white-space:nowrap;letter-spacing:0.25px">Unlimited Website</div><svg class="abs" style="left:160px;top:245.20000000000005px" width="10" height="10" viewBox="0 0 10 10"><circle cx="5" cy="5" r="4.6" fill="#111"/><path d="M2.8 5.2l1.5 1.5 3-3" fill="none" stroke="#fff" stroke-width="1.2"/></svg><div class="abs" style="left:174.5px;top:245.20000000000005px;font-size:8.2px;font-weight:bold;color:#747474;line-height:1;white-space:nowrap;letter-spacing:0.25px">cPanel Control Panel</div><svg class="abs" style="left:160px;top:261.6px" width="10" height="10" viewBox="0 0 10 10"><circle cx="5" cy="5" r="4.6" fill="#111"/><path d="M2.8 5.2l1.5 1.5 3-3" fill="none" stroke="#fff" stroke-width="1.2"/></svg><div class="abs" style="left:174.5px;top:261.6px;font-size:8.2px;font-weight:bold;color:#747474;line-height:1;white-space:nowrap;letter-spacing:0.25px">Cloud Storage</div><div class="abs" style="left:311px;top:89px;width:150px;height:203px;border:1.5px solid #c4c4c4;border-radius:7px"></div><div class="abs" style="left:320.5px;top:100px;font-size:12.4px;color:#333;line-height:1;white-space:nowrap;letter-spacing:0.35px">Enterprise</div><div class="abs" style="left:320.5px;top:128px;font-size:14.6px;font-weight:bold;color:#222;line-height:1;white-space:nowrap">$29.99<span style="font-size:9px;font-weight:normal;color:#333;margin-left:1px;letter-spacing:0.2px">/month</span></div><div class="abs" style="left:320.5px;top:155.5px;font-size:8.6px;font-weight:bold;color:#111;line-height:1;white-space:nowrap;letter-spacing:0.2px">Get Started <span style="font-size:11px;position:relative;top:0.5px">&#187;</span></div><div class="abs" style="left:320.5px;top:176.5px;width:131px;height:1.5px;background:#9a9a9a"></div><svg class="abs" style="left:326px;top:196.0px" width="10" height="10" viewBox="0 0 10 10"><circle cx="5" cy="5" r="4.6" fill="#111"/><path d="M2.8 5.2l1.5 1.5 3-3" fill="none" stroke="#fff" stroke-width="1.2"/></svg><div class="abs" style="left:340.5px;top:196.0px;font-size:8.2px;font-weight:bold;color:#747474;line-height:1;white-space:nowrap;letter-spacing:0.25px">10 GB SSD Storage</div><svg class="abs" style="left:326px;top:212.39999999999998px" width="10" height="10" viewBox="0 0 10 10"><circle cx="5" cy="5" r="4.6" fill="#111"/><path d="M2.8 5.2l1.5 1.5 3-3" fill="none" stroke="#fff" stroke-width="1.2"/></svg><div class="abs" style="left:340.5px;top:212.39999999999998px;font-size:8.2px;font-weight:bold;color:#747474;line-height:1;white-space:nowrap;letter-spacing:0.25px">10 MySQL Database</div><svg class="abs" style="left:326px;top:228.79999999999995px" width="10" height="10" viewBox="0 0 10 10"><circle cx="5" cy="5" r="4.6" fill="#111"/><path d="M2.8 5.2l1.5 1.5 3-3" fill="none" stroke="#fff" stroke-width="1.2"/></svg><div class="abs" style="left:340.5px;top:228.79999999999995px;font-size:8.2px;font-weight:bold;color:#747474;line-height:1;white-space:nowrap;letter-spacing:0.25px">Unlimited Website</div><svg class="abs" style="left:326px;top:245.20000000000005px" width="10" height="10" viewBox="0 0 10 10"><circle cx="5" cy="5" r="4.6" fill="#111"/><path d="M2.8 5.2l1.5 1.5 3-3" fill="none" stroke="#fff" stroke-width="1.2"/></svg><div class="abs" style="left:340.5px;top:245.20000000000005px;font-size:8.2px;font-weight:bold;color:#747474;line-height:1;white-space:nowrap;letter-spacing:0.25px">cPanel Control Panel</div><svg class="abs" style="left:326px;top:261.6px" width="10" height="10" viewBox="0 0 10 10"><circle cx="5" cy="5" r="4.6" fill="#111"/><path d="M2.8 5.2l1.5 1.5 3-3" fill="none" stroke="#fff" stroke-width="1.2"/></svg><div class="abs" style="left:340.5px;top:261.6px;font-size:8.2px;font-weight:bold;color:#747474;line-height:1;white-space:nowrap;letter-spacing:0.25px">Cloud Storage</div><div class="abs" style="left:477px;top:89px;width:150px;height:203px;border:1.5px solid #c4c4c4;border-radius:7px"></div><div class="abs" style="left:486.5px;top:100px;font-size:12.4px;color:#333;line-height:1;white-space:nowrap;letter-spacing:0.35px">Dedicated</div><div class="abs" style="left:486.5px;top:128px;font-size:14.6px;font-weight:bold;color:#222;line-height:1;white-space:nowrap">$39.99<span style="font-size:9px;font-weight:normal;color:#333;margin-left:1px;letter-spacing:0.2px">/month</span></div><div class="abs" style="left:486.5px;top:155.5px;font-size:8.6px;font-weight:bold;color:#111;line-height:1;white-space:nowrap;letter-spacing:0.2px">Get Started <span style="font-size:11px;position:relative;top:0.5px">&#187;</span></div><div class="abs" style="left:486.5px;top:176.5px;width:131px;height:1.5px;background:#9a9a9a"></div><svg class="abs" style="left:492px;top:196.0px" width="10" height="10" viewBox="0 0 10 10"><circle cx="5" cy="5" r="4.6" fill="#111"/><path d="M2.8 5.2l1.5 1.5 3-3" fill="none" stroke="#fff" stroke-width="1.2"/></svg><div class="abs" style="left:506.5px;top:196.0px;font-size:8.2px;font-weight:bold;color:#747474;line-height:1;white-space:nowrap;letter-spacing:0.25px">10 GB SSD Storage</div><svg class="abs" style="left:492px;top:212.39999999999998px" width="10" height="10" viewBox="0 0 10 10"><circle cx="5" cy="5" r="4.6" fill="#111"/><path d="M2.8 5.2l1.5 1.5 3-3" fill="none" stroke="#fff" stroke-width="1.2"/></svg><div class="abs" style="left:506.5px;top:212.39999999999998px;font-size:8.2px;font-weight:bold;color:#747474;line-height:1;white-space:nowrap;letter-spacing:0.25px">10 MySQL Database</div><svg class="abs" style="left:492px;top:228.79999999999995px" width="10" height="10" viewBox="0 0 10 10"><circle cx="5" cy="5" r="4.6" fill="#111"/><path d="M2.8 5.2l1.5 1.5 3-3" fill="none" stroke="#fff" stroke-width="1.2"/></svg><div class="abs" style="left:506.5px;top:228.79999999999995px;font-size:8.2px;font-weight:bold;color:#747474;line-height:1;white-space:nowrap;letter-spacing:0.25px">Unlimited Website</div><svg class="abs" style="left:492px;top:245.20000000000005px" width="10" height="10" viewBox="0 0 10 10"><circle cx="5" cy="5" r="4.6" fill="#111"/><path d="M2.8 5.2l1.5 1.5 3-3" fill="none" stroke="#fff" stroke-width="1.2"/></svg><div class="abs" style="left:506.5px;top:245.20000000000005px;font-size:8.2px;font-weight:bold;color:#747474;line-height:1;white-space:nowrap;letter-spacing:0.25px">cPanel Control Panel</div><svg class="abs" style="left:492px;top:261.6px" width="10" height="10" viewBox="0 0 10 10"><circle cx="5" cy="5" r="4.6" fill="#111"/><path d="M2.8 5.2l1.5 1.5 3-3" fill="none" stroke="#fff" stroke-width="1.2"/></svg><div class="abs" style="left:506.5px;top:261.6px;font-size:8.2px;font-weight:bold;color:#747474;line-height:1;white-space:nowrap;letter-spacing:0.25px">Cloud Storage</div>
</div>
<div class="card" style="left:919px;top:660px">
<div class="ctitle" style="left:22.5px;top:23.5px;font-size:19.6px">Testimonials</div>
<svg class="abs" style="left:738px;top:17px" width="12" height="28" viewBox="0 0 12 28" fill="#1c1c1c"><circle cx="5.7" cy="5.4" r="2.7"/><circle cx="5.7" cy="14.3" r="2.7"/><circle cx="5.7" cy="23.3" r="2.7"/></svg>
<svg class="abs" style="left:204.5px;top:101px" width="24" height="22" viewBox="0 0 24 22" fill="#111"><circle cx="5.5" cy="5.3" r="4.6"/><path d="M8.5 7.5C9 12 7 16.5 2.5 19.5L1.5 18C4.5 15.5 5.5 12 4.5 9z"/><circle cx="17.5" cy="5.3" r="4.6"/><path d="M20.5 7.5C21 12 19 16.5 14.5 19.5L13.5 18C16.5 15.5 17.5 12 16.5 9z"/></svg><svg class="abs" style="left:156.5px;top:144px" width="120" height="42" viewBox="1077.5 0 120 42" fill="#000"><g transform="translate(0,0.3)"><path d="M1122.90 0.00L1128.48 14.11L1143.63 15.06L1131.94 24.74L1135.71 39.44L1122.90 31.30L1110.09 39.44L1113.86 24.74L1102.17 15.06L1117.32 14.11Z"/><path d="M1137.10 0.00L1142.68 14.11L1157.83 15.06L1146.14 24.74L1149.91 39.44L1137.10 31.30L1124.29 39.44L1128.06 24.74L1116.37 15.06L1131.52 14.11Z"/><path d="M1151.30 0.00L1156.88 14.11L1172.03 15.06L1160.34 24.74L1164.11 39.44L1151.30 31.30L1138.49 39.44L1142.26 24.74L1130.57 15.06L1145.72 14.11Z"/><path d="M1165.50 0.00L1171.08 14.11L1186.23 15.06L1174.54 24.74L1178.31 39.44L1165.50 31.30L1152.69 39.44L1156.46 24.74L1144.77 15.06L1159.92 14.11Z"/><path d="M1179.70 0.00L1185.28 14.11L1200.43 15.06L1188.74 24.74L1192.51 39.44L1179.70 31.30L1166.89 39.44L1170.66 24.74L1158.97 15.06L1174.12 14.11Z"/></g></svg><div class="abs" style="left:141.5px;top:193px;width:150px;text-align:center;font-size:7.4px;font-weight:bold;color:#2a2a2a;line-height:10.7px;white-space:nowrap">Duis aute irure dolor in reprehenderit in<br>voluptate velit esse cillum dolore eu<br>fugiat nulla pariatur excepteur sint<br>occaecat cupidatat non proident sunt<br>in culpa qui officia deserunt laborum.</div><svg class="abs" style="left:202.20000000000005px;top:253.60000000000002px" width="28.6" height="28.6" viewBox="0 0 28 28"><defs><clipPath id="avc0"><circle cx="14" cy="14" r="13.5"/></clipPath></defs><g clip-path="url(#avc0)"><circle cx="14" cy="14" r="14" fill="#e2e2e2"/><path d="M5 28C5 12 8 4 14 4C20 4 23 12 23 28z" fill="#3a3a3a"/><ellipse cx="14" cy="13.5" rx="5" ry="7" fill="#b8b8b8"/></g><circle cx="14" cy="14" r="13.5" fill="none" stroke="#c4c4c4" stroke-width="1"/></svg><div class="abs" style="left:176.5px;top:290.5px;width:80px;text-align:center;font-size:10.2px;font-weight:bold;color:#474747;line-height:1;white-space:nowrap">Jane Doe</div><div class="abs" style="left:176.5px;top:304.79999999999995px;width:80px;text-align:center;font-size:7px;font-style:italic;font-weight:bold;color:#333;line-height:1;white-space:nowrap">Customer</div><svg class="abs" style="left:374.0px;top:101px" width="24" height="22" viewBox="0 0 24 22" fill="#111"><circle cx="5.5" cy="5.3" r="4.6"/><path d="M8.5 7.5C9 12 7 16.5 2.5 19.5L1.5 18C4.5 15.5 5.5 12 4.5 9z"/><circle cx="17.5" cy="5.3" r="4.6"/><path d="M20.5 7.5C21 12 19 16.5 14.5 19.5L13.5 18C16.5 15.5 17.5 12 16.5 9z"/></svg><svg class="abs" style="left:326.0px;top:144px" width="120" height="42" viewBox="1247.0 0 120 42" fill="#000"><g transform="translate(0,0.3)"><path d="M1292.40 0.00L1297.98 14.11L1313.13 15.06L1301.44 24.74L1305.21 39.44L1292.40 31.30L1279.59 39.44L1283.36 24.74L1271.67 15.06L1286.82 14.11Z"/><path d="M1306.60 0.00L1312.18 14.11L1327.33 15.06L1315.64 24.74L1319.41 39.44L1306.60 31.30L1293.79 39.44L1297.56 24.74L1285.87 15.06L1301.02 14.11Z"/><path d="M1320.80 0.00L1326.38 14.11L1341.53 15.06L1329.84 24.74L1333.61 39.44L1320.80 31.30L1307.99 39.44L1311.76 24.74L1300.07 15.06L1315.22 14.11Z"/><path d="M1335.00 0.00L1340.58 14.11L1355.73 15.06L1344.04 24.74L1347.81 39.44L1335.00 31.30L1322.19 39.44L1325.96 24.74L1314.27 15.06L1329.42 14.11Z"/><path d="M1349.20 0.00L1354.78 14.11L1369.93 15.06L1358.24 24.74L1362.01 39.44L1349.20 31.30L1336.39 39.44L1340.16 24.74L1328.47 15.06L1343.62 14.11Z"/></g></svg><div class="abs" style="left:311.0px;top:193px;width:150px;text-align:center;font-size:7.4px;font-weight:bold;color:#2a2a2a;line-height:10.7px;white-space:nowrap">Duis aute irure dolor in reprehenderit in<br>voluptate velit esse cillum dolore eu<br>fugiat nulla pariatur excepteur sint<br>occaecat cupidatat non proident sunt<br>in culpa qui officia deserunt laborum.</div><svg class="abs" style="left:371.70000000000005px;top:253.60000000000002px" width="28.6" height="28.6" viewBox="0 0 28 28"><defs><clipPath id="avc1"><circle cx="14" cy="14" r="13.5"/></clipPath></defs><g clip-path="url(#avc1)"><circle cx="14" cy="14" r="14" fill="#dcdcdc"/><path d="M3 28C5 21 9 19 14 19C19 19 23 21 25 28z" fill="#2e2e2e"/><path d="M12 19L14 24L16 19z" fill="#eee"/><ellipse cx="14" cy="12" rx="5.5" ry="7" fill="#a9a9a9"/><path d="M8.5 10C8.5 5 11 3.5 14 3.5C17.5 3.5 19.5 5 19.5 9C17 7 12 7 8.5 10z" fill="#5a5a5a"/></g><circle cx="14" cy="14" r="13.5" fill="none" stroke="#c4c4c4" stroke-width="1"/></svg><div class="abs" style="left:346.0px;top:290.5px;width:80px;text-align:center;font-size:10.2px;font-weight:bold;color:#474747;line-height:1;white-space:nowrap">John Doe</div><div class="abs" style="left:346.0px;top:304.79999999999995px;width:80px;text-align:center;font-size:7px;font-style:italic;font-weight:bold;color:#333;line-height:1;white-space:nowrap">Customer</div><svg class="abs" style="left:543.5px;top:101px" width="24" height="22" viewBox="0 0 24 22" fill="#111"><circle cx="5.5" cy="5.3" r="4.6"/><path d="M8.5 7.5C9 12 7 16.5 2.5 19.5L1.5 18C4.5 15.5 5.5 12 4.5 9z"/><circle cx="17.5" cy="5.3" r="4.6"/><path d="M20.5 7.5C21 12 19 16.5 14.5 19.5L13.5 18C16.5 15.5 17.5 12 16.5 9z"/></svg><svg class="abs" style="left:495.5px;top:144px" width="120" height="42" viewBox="1416.5 0 120 42" fill="#000"><g transform="translate(0,0.3)"><path d="M1461.90 0.00L1467.48 14.11L1482.63 15.06L1470.94 24.74L1474.71 39.44L1461.90 31.30L1449.09 39.44L1452.86 24.74L1441.17 15.06L1456.32 14.11Z"/><path d="M1476.10 0.00L1481.68 14.11L1496.83 15.06L1485.14 24.74L1488.91 39.44L1476.10 31.30L1463.29 39.44L1467.06 24.74L1455.37 15.06L1470.52 14.11Z"/><path d="M1490.30 0.00L1495.88 14.11L1511.03 15.06L1499.34 24.74L1503.11 39.44L1490.30 31.30L1477.49 39.44L1481.26 24.74L1469.57 15.06L1484.72 14.11Z"/><path d="M1504.50 0.00L1510.08 14.11L1525.23 15.06L1513.54 24.74L1517.31 39.44L1504.50 31.30L1491.69 39.44L1495.46 24.74L1483.77 15.06L1498.92 14.11Z"/><path d="M1518.70 0.00L1524.28 14.11L1539.43 15.06L1527.74 24.74L1531.51 39.44L1518.70 31.30L1505.89 39.44L1509.66 24.74L1497.97 15.06L1513.12 14.11Z"/></g></svg><div class="abs" style="left:480.5px;top:193px;width:150px;text-align:center;font-size:7.4px;font-weight:bold;color:#2a2a2a;line-height:10.7px;white-space:nowrap">Duis aute irure dolor in reprehenderit in<br>voluptate velit esse cillum dolore eu<br>fugiat nulla pariatur excepteur sint<br>occaecat cupidatat non proident sunt<br>in culpa qui officia deserunt laborum.</div><svg class="abs" style="left:541.2px;top:253.60000000000002px" width="28.6" height="28.6" viewBox="0 0 28 28"><defs><clipPath id="avc2"><circle cx="14" cy="14" r="13.5"/></clipPath></defs><g clip-path="url(#avc2)"><circle cx="14" cy="14" r="14" fill="#9a9a9a"/><path d="M3 28C5 21 9 19 14 19C19 19 23 21 25 28z" fill="#1e1e1e"/><ellipse cx="14" cy="13" rx="5.5" ry="6.5" fill="#6e6e6e"/><path d="M8.5 10C8 4 11 2.5 14 2.5C17.5 2.5 20 4 19.5 10C17 7.5 12 7.5 8.5 10z" fill="#151515"/></g><circle cx="14" cy="14" r="13.5" fill="none" stroke="#c4c4c4" stroke-width="1"/></svg><div class="abs" style="left:515.5px;top:290.5px;width:80px;text-align:center;font-size:10.2px;font-weight:bold;color:#474747;line-height:1;white-space:nowrap">Michael Doe</div><div class="abs" style="left:515.5px;top:304.79999999999995px;width:80px;text-align:center;font-size:7px;font-style:italic;font-weight:bold;color:#333;line-height:1;white-space:nowrap">Customer</div>
</div>
<div class="card" style="left:1720px;top:660px">
<div class="ctitle" style="left:22.5px;top:23.5px;font-size:19.3px">Team Members</div>
<svg class="abs" style="left:738px;top:17px" width="12" height="28" viewBox="0 0 12 28" fill="#1c1c1c"><circle cx="5.7" cy="5.4" r="2.7"/><circle cx="5.7" cy="14.3" r="2.7"/><circle cx="5.7" cy="23.3" r="2.7"/></svg>
<svg class="abs" style="left:145.20000000000005px;top:89.5px" width="143" height="117" viewBox="0 0 143 117"><defs><linearGradient id="g1" x1="0" y1="0" x2="0" y2="1"><stop offset="0" stop-color="#c6c6c6"/><stop offset="0.45" stop-color="#a8a8a8"/><stop offset="1" stop-color="#8a8a8a"/></linearGradient><filter id="bl1"><feGaussianBlur stdDeviation="2.5"/></filter></defs>
 <rect width="143" height="117" fill="url(#g1)"/>
 <g filter="url(#bl1)"><path d="M-5 52C10 55 25 62 40 75L45 117H-5z" fill="#686868"/><path d="M95 70C110 50 125 30 148 20V117H100z" fill="#747474"/><path d="M110 85L148 75V117H120z" fill="#9a9a9a"/></g>
 <path d="M13 117C16 98 26 85 38 78C48 71 55 64 58 60L72 72L95 64C100 72 108 78 116 85C126 94 130 105 132 117z" fill="#222"/>
 <ellipse cx="69" cy="48" rx="21" ry="26" fill="#b4b4b4"/>
 <path d="M47 36C44 14 54 5 68 5C82 5 90 14 89 33L87 38C83 27 77 23 68 23C58 23 51 28 49 40z" fill="#1c1c1c"/>
 <path d="M58 58Q70 68 80 58Q70 62 58 58z" fill="#f2f2f2"/></svg><div class="abs" style="left:145.20000000000005px;top:217px;font-size:7.8px;color:#555;line-height:1;white-space:nowrap;-webkit-text-stroke:0.25px #555;letter-spacing:0.2px">CEO</div><div class="abs" style="left:145.20000000000005px;top:232.60000000000002px;width:143.5px;height:1.8px;background:#4a4a4a"></div><div class="abs" style="left:145.20000000000005px;top:245.5px;font-size:12.2px;color:#222;line-height:1;white-space:nowrap;letter-spacing:0.5px;-webkit-text-stroke:0.25px #222">Chris Brannan</div><div class="abs" style="left:145.79999999999995px;top:266.20000000000005px;width:14px;height:14px;background:#6b6b6b;border-radius:1.5px;color:#fff;font-size:9px;font-weight:bold;line-height:14px;text-align:center">f</div><div class="abs" style="left:164.5999999999999px;top:266.20000000000005px;width:14px;height:14px;background:#111;border-radius:1.5px;color:#fff;font-size:9px;font-weight:bold;line-height:14px;text-align:center">X</div><div class="abs" style="left:183.39999999999986px;top:266.20000000000005px;width:14px;height:14px;background:#8c8c8c;border-radius:1.5px;color:#fff;font-size:9px;font-weight:bold;line-height:14px;text-align:center">in</div><svg class="abs" style="left:314.79999999999995px;top:89.5px" width="143" height="117" viewBox="0 0 143 117"><defs><linearGradient id="g2" x1="0" y1="0" x2="1" y2="0"><stop offset="0" stop-color="#a6a6a6"/><stop offset="0.7" stop-color="#cacaca"/><stop offset="1" stop-color="#b2b2b2"/></linearGradient></defs>
 <rect width="143" height="117" fill="url(#g2)"/>
 <path d="M22 117C22 105 28 96 37 94L40 117z" fill="#777"/>
 <path d="M89 93C100 88 118 90 124 102L128 117H86z" fill="#bcbcbc"/>
 <path d="M52 93L92 92L88 117H50z" fill="#303030"/>
 <path d="M36 50C40 40 52 34 62 36C58 55 58 80 60 117H42C38 95 36 70 36 50z" fill="#8a8a8a"/>
 <ellipse cx="73" cy="46" rx="49" ry="33" transform="rotate(-24 73 46)" fill="#0e0e0e"/>
 <ellipse cx="77" cy="62" rx="17" ry="28" fill="#a2a2a2"/>
 <path d="M89 38C96 45 102 55 104 68L96 72C94 58 92 48 86 40z" fill="#d0d0d0"/>
</svg><div class="abs" style="left:314.79999999999995px;top:217px;font-size:7.8px;color:#555;line-height:1;white-space:nowrap;-webkit-text-stroke:0.25px #555;letter-spacing:0.2px">VP OF SALES</div><div class="abs" style="left:314.79999999999995px;top:232.60000000000002px;width:143.5px;height:1.8px;background:#4a4a4a"></div><div class="abs" style="left:314.79999999999995px;top:245.5px;font-size:12.2px;color:#222;line-height:1;white-space:nowrap;letter-spacing:0.5px;-webkit-text-stroke:0.25px #222">Jenny Hammond</div><div class="abs" style="left:315.39999999999986px;top:266.20000000000005px;width:14px;height:14px;background:#6b6b6b;border-radius:1.5px;color:#fff;font-size:9px;font-weight:bold;line-height:14px;text-align:center">f</div><div class="abs" style="left:334.1999999999998px;top:266.20000000000005px;width:14px;height:14px;background:#111;border-radius:1.5px;color:#fff;font-size:9px;font-weight:bold;line-height:14px;text-align:center">X</div><div class="abs" style="left:353.0px;top:266.20000000000005px;width:14px;height:14px;background:#8c8c8c;border-radius:1.5px;color:#fff;font-size:9px;font-weight:bold;line-height:14px;text-align:center">in</div><svg class="abs" style="left:484.1999999999998px;top:89.5px" width="143" height="117" viewBox="0 0 143 117"><defs><linearGradient id="g3" x1="0" y1="0" x2="0" y2="1"><stop offset="0" stop-color="#dadada"/><stop offset="0.12" stop-color="#d0d0d0"/><stop offset="0.2" stop-color="#ababab"/><stop offset="0.3" stop-color="#bcbcbc"/><stop offset="1" stop-color="#bdbdbd"/></linearGradient></defs>
 <rect width="143" height="117" fill="url(#g3)"/>
 <path d="M5 117C10 100 22 78 34 69L60 64L100 65L125 75C135 82 140 100 143 117z" fill="#474747"/>
 <path d="M20 100C25 85 30 75 38 70L45 90L35 117H12z" fill="#5e5e5e"/>
 <path d="M70 86L96 84L98 117H72z" fill="#262626"/>
 <ellipse cx="78" cy="54" rx="20" ry="27" fill="#b6b6b6"/>
 <path d="M50 52C44 25 58 8 76 8C96 8 106 22 101 50C98 35 92 28 80 28C68 28 60 34 56 56z" fill="#262626"/>
 <path d="M68 64Q80 74 92 64Q80 69 68 64z" fill="#f2f2f2"/></svg><div class="abs" style="left:484.1999999999998px;top:217px;font-size:7.8px;color:#555;line-height:1;white-space:nowrap;-webkit-text-stroke:0.25px #555;letter-spacing:0.2px">CFO</div><div class="abs" style="left:484.1999999999998px;top:232.60000000000002px;width:143.5px;height:1.8px;background:#4a4a4a"></div><div class="abs" style="left:484.1999999999998px;top:245.5px;font-size:12.2px;color:#222;line-height:1;white-space:nowrap;letter-spacing:0.5px;-webkit-text-stroke:0.25px #222">Nicole Smith</div><div class="abs" style="left:484.7999999999997px;top:266.20000000000005px;width:14px;height:14px;background:#6b6b6b;border-radius:1.5px;color:#fff;font-size:9px;font-weight:bold;line-height:14px;text-align:center">f</div><div class="abs" style="left:503.5999999999999px;top:266.20000000000005px;width:14px;height:14px;background:#111;border-radius:1.5px;color:#fff;font-size:9px;font-weight:bold;line-height:14px;text-align:center">X</div><div class="abs" style="left:522.3999999999996px;top:266.20000000000005px;width:14px;height:14px;background:#8c8c8c;border-radius:1.5px;color:#fff;font-size:9px;font-weight:bold;line-height:14px;text-align:center">in</div>
</div>
<div class="card" style="left:118px;top:1204px"></div>
<div class="card" style="left:919px;top:1204px"></div>
<div class="abs" style="left:2553px;top:1208px;width:7px;height:7px;background:radial-gradient(circle 7px at 0 0,transparent 6.5px,#34503f 7px)"></div>
<div class="abs" style="left:0;top:1207px;width:8px;height:8px;background:radial-gradient(circle 8px at 8px 0,transparent 7.5px,#25293d 8px)"></div>
<div class="abs" style="left:2551px;top:74px;width:6px;height:764px;border-radius:3px;background:#262b38"></div>
<div class="abs" style="left:1591px;top:67px;width:216px;height:333px;background:#e0574f;border-radius:0 0 9px 9px;box-shadow:0 5px 14px rgba(0,0,0,0.10)"></div>
<div class="abs" style="left:1606px;top:82px;width:186px;height:303px;background:#252a37"></div>
<div class="abs" style="left:1606px;top:185px;width:186px;height:1.5px;background:#343a48"></div>
<div class="abs" style="left:1606px;top:242px;width:186px;height:45.5px;background:#3f63e0"></div>
<div class="abs" style="left:1618px;top:98.7px;font-size:18.6px;color:#eef0f4;-webkit-text-stroke:0.35px #eef0f4;line-height:1;white-space:nowrap">Canvas Settings</div>
<div class="abs" style="left:1618px;top:143.7px;font-size:18.6px;color:#eef0f4;-webkit-text-stroke:0.35px #eef0f4;line-height:1;white-space:nowrap">Export Canvas</div>
<div class="abs" style="left:1618px;top:210.7px;font-size:18.6px;color:#eef0f4;-webkit-text-stroke:0.35px #eef0f4;line-height:1;white-space:nowrap">Edit Canvas</div>
<div class="abs" style="left:1618px;top:255.7px;font-size:18.6px;color:#eef0f4;-webkit-text-stroke:0.35px #eef0f4;line-height:1;white-space:nowrap">Make Main Canvas</div>
<div class="abs" style="left:1618px;top:299.7px;font-size:18.6px;color:#eef0f4;-webkit-text-stroke:0.35px #eef0f4;line-height:1;white-space:nowrap">Duplicate Canvas</div>
<div class="abs" style="left:1618px;top:344.7px;font-size:18.6px;color:#eef0f4;-webkit-text-stroke:0.35px #eef0f4;line-height:1;white-space:nowrap">Delete Canvas</div>
</body></html>
